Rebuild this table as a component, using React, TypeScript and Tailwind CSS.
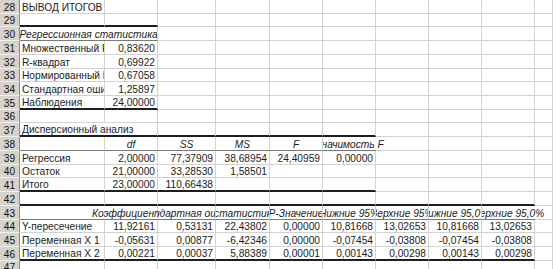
import React from "react";

type Border = "n" | "thin" | "thick";

type CellP = {
  s?: number;
  t?: string;
  a?: "l" | "r" | "c";
  i?: boolean;
  b?: Border;
  noR?: boolean;
  spill?: boolean;
};

// column widths A..I, J takes the rest
const W = [85, 53, 58, 54, 53, 53, 53, 53, 53];

function fill(cells: CellP[], b: Border = "n", upTo = 0): CellP[] {
  const out: CellP[] = [];
  let col = 0;
  for (const c of cells) {
    out.push({ ...c, b: col < upTo ? b : "n" });
    col += c.s ?? 1;
  }
  while (col < 10) {
    out.push({ b: col < upTo ? b : "n" });
    col++;
  }
  return out;
}

const num = (t: string): CellP => ({ t, a: "r" });
const hd = (t: string): CellP => ({ t, a: "c", i: true });

const rows: { n: number; cells: CellP[] }[] = [
  { n: 28, cells: fill([{ t: "ВЫВОД ИТОГОВ" }]) },
  { n: 29, cells: fill([], "thick", 2) },
  { n: 30, cells: fill([{ s: 2, t: "Регрессионная статистика", a: "c", i: true }], "thin", 2) },
  { n: 31, cells: fill([{ t: "Множественный R" }, num("0,83620")]) },
  { n: 32, cells: fill([{ t: "R-квадрат" }, num("0,69922")]) },
  { n: 33, cells: fill([{ t: "Нормированный R-квадрат" }, num("0,67058")]) },
  { n: 34, cells: fill([{ t: "Стандартная ошибка" }, num("1,25897")]) },
  { n: 35, cells: fill([{ t: "Наблюдения" }, num("24,00000")], "thick", 2) },
  { n: 36, cells: fill([]) },
  { n: 37, cells: fill([{ s: 2, t: "Дисперсионный анализ" }], "thick", 6) },
  {
    n: 38,
    cells: fill(
      [{}, hd("df"), hd("SS"), hd("MS"), hd("F"), { t: "Значимость F", i: true, spill: true, noR: true }],
      "thin",
      6
    ),
  },
  {
    n: 39,
    cells: fill([
      { t: "Регрессия" },
      num("2,00000"),
      num("77,37909"),
      num("38,68954"),
      num("24,40959"),
      num("0,00000"),
    ]),
  },
  { n: 40, cells: fill([{ t: "Остаток" }, num("21,00000"), num("33,28530"), num("1,58501")]) },
  { n: 41, cells: fill([{ t: "Итого" }, num("23,00000"), num("110,66438")], "thick", 6) },
  { n: 42, cells: fill([], "thick", 9) },
  {
    n: 43,
    cells: fill(
      [
        { noR: true },
        { t: "Коэффициенты", i: true, spill: true },
        hd("Стандартная ошибка"),
        hd("t-статистика"),
        hd("P-Значение"),
        hd("Нижние 95%"),
        hd("Верхние 95%"),
        hd("Нижние 95,0%"),
        { t: "Верхние 95,0%", i: true, spill: true, noR: true },
      ],
      "thin",
      9
    ),
  },
  {
    n: 44,
    cells: fill([
      { t: "Y-пересечение" },
      num("11,92161"),
      num("0,53131"),
      num("22,43802"),
      num("0,00000"),
      num("10,81668"),
      num("13,02653"),
      num("10,81668"),
      num("13,02653"),
    ]),
  },
  {
    n: 45,
    cells: fill([
      { t: "Переменная X 1" },
      num("-0,05631"),
      num("0,00877"),
      num("-6,42346"),
      num("0,00000"),
      num("-0,07454"),
      num("-0,03808"),
      num("-0,07454"),
      num("-0,03808"),
    ]),
  },
  {
    n: 46,
    cells: fill(
      [
        { t: "Переменная X 2" },
        num("0,00221"),
        num("0,00037"),
        num("5,88389"),
        num("0,00001"),
        num("0,00143"),
        num("0,00298"),
        num("0,00143"),
        num("0,00298"),
      ],
      "thick",
      9
    ),
  },
  { n: 47, cells: fill([]) },
];

function Cell({ c, col }: { c: CellP; col: number }) {
  const span = c.s ?? 1;
  const width = col >= 9 ? undefined : W.slice(col, col + span).reduce((x, y) => x + y, 0);
  const bottom =
    c.b === "thick"
      ? "border-b-2 border-b-[#1e1e1e]"
      : c.b === "thin"
      ? "border-b border-b-[#7a7a7a]"
      : "border-b border-b-[#d2d2d2]";
  const right = c.noR ? "" : "border-r border-r-[#d2d2d2]";
  const align = c.a === "r" ? "justify-end" : c.a === "c" || c.spill ? "justify-center" : "justify-start";
  const layer = c.t && !c.spill ? "relative bg-white overflow-hidden" : c.spill ? "overflow-visible" : "";

  return (
    <div
      className={`flex h-full items-end px-[2px] ${width ? "shrink-0" : "min-w-0 flex-1"} ${bottom} ${right} ${align} ${layer}`}
      style={width ? { width } : undefined}
    >
      {c.t && (
        <span className={`shrink-0 whitespace-nowrap leading-[11px] ${c.i ? "italic" : ""}`}>
          {c.t}
        </span>
      )}
    </div>
  );
}

export default function App() {
  return (
    <div className="h-[269px] w-[553px] overflow-hidden bg-white font-['Liberation_Sans',Arial,sans-serif] text-[10.2px] text-[#1c1c1c]">
      {rows.map((r) => {
        let col = 0;
        return (
          <div key={r.n} className="flex h-[13.72px]">
            <div className="flex w-[20px] shrink-0 items-end justify-center border-r border-b border-r-[#8a8a8a] border-b-[#f2f0ec] bg-[#d6d3cd] leading-[11px] text-[#111]">
              {r.n}
            </div>
            {r.cells.map((c, k) => {
              const el = <Cell key={k} c={c} col={col} />;
              col += c.s ?? 1;
              return el;
            })}
          </div>
        );
      })}
    </div>
  );
}
